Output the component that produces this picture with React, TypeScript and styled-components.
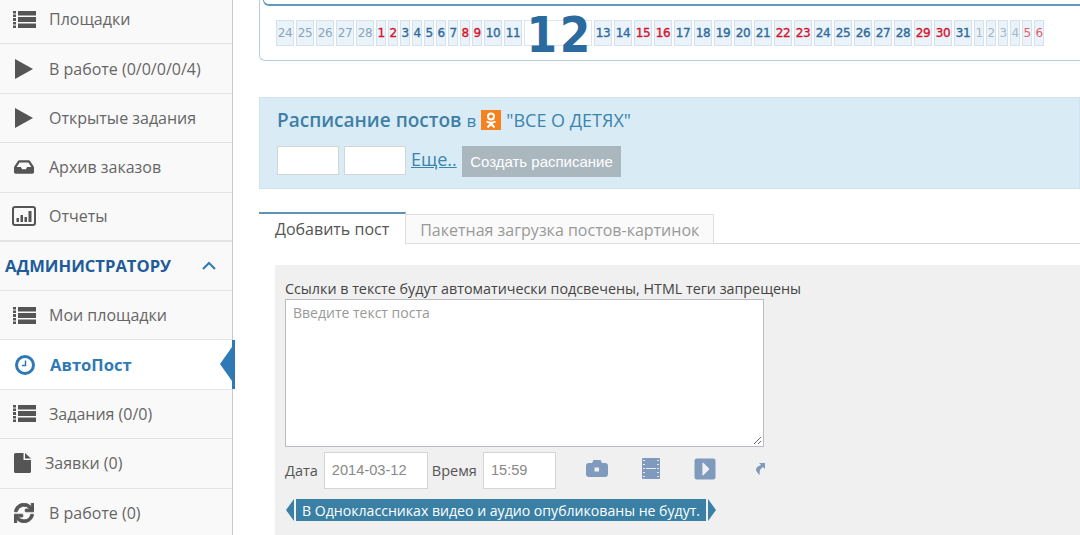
import React from 'react'
import styled, { createGlobalStyle } from 'styled-components'
import { FaInbox, FaSync, FaCaretSquareRight } from 'react-icons/fa'

const Global = createGlobalStyle`
  html, body { margin: 0; padding: 0; height: 535px; overflow: hidden; background: #fff; }
  body { font-family: "Open Sans", "Noto Sans", sans-serif; color: #555; }
  * { box-sizing: border-box; }
`
const Page = styled.div`
  display: flex;
  width: 1080px;
  height: 535px;
  overflow: hidden;
`
const Sidebar = styled.nav`
  flex: 0 0 233px;
  background: #f9f9f9;
  border-right: 1px solid #c8c8c8;
  height: 535px;
`
const MenuList = styled.ul<{ $pull?: number }>`
  list-style: none;
  margin: ${p => -(p.$pull ?? 0)}px 0 0;
  padding: 0;
`
const MenuItem = styled.li<{ $active?: boolean; $heavy?: boolean }>`
  position: relative;
  display: flex;
  align-items: center;
  height: 49.4px;
  padding-left: 12px;
  font-size: ${p => (p.$active ? 16.6 : 16)}px;
  color: ${p => (p.$active ? '#2f7ab5' : '#666')};
  font-weight: ${p => (p.$active ? 700 : 400)};
  background: ${p => (p.$active ? '#fff' : 'transparent')};
  border-bottom: ${p => (p.$heavy ? '2px solid #e4e4e4' : '1px solid #e4e4e4')};
`
const IconSlot = styled.span<{ $color?: string; $width?: number }>`
  display: flex;
  align-items: center;
  justify-content: center;
  width: ${p => p.$width ?? 37}px;
  flex: none;
  padding-right: ${p => ((p.$width ?? 37) > 30 ? 13 : 0)}px;
  color: ${p => p.$color ?? '#555'};
`
const ActiveMark = styled.span`
  position: absolute;
  right: -3px;
  top: 0;
  height: 49px;
  width: 15px;
  border-right: 3px solid #2f7ab5;
  &::before {
    content: '';
    position: absolute;
    right: 0;
    top: 7px;
    border-style: solid;
    border-width: 17px 12px 17px 0;
    border-color: transparent #2f7ab5 transparent transparent;
  }
`
const SectionHead = styled.div`
  display: flex;
  align-items: center;
  justify-content: space-between;
  height: 49px;
  padding: 0 16px 0 5px;
  font-size: 16.6px;
  font-weight: 700;
  color: #1f5c99;
  border-bottom: 1px solid #e4e4e4;
`
const Main = styled.main`
  flex: 1;
  min-width: 0;
  padding-left: 26px;
`
const CalendarCard = styled.section`
  height: 61px;
  border: 1px solid #b5cfdf;
  border-top: none;
  border-right: none;
  border-bottom-left-radius: 6px;
  padding-left: 3px;
`
const CalendarTop = styled.div`
  height: 6px;
  border: 1px solid #5f9bbd;
  border-width: 0 0 2px 1px;
  border-bottom-left-radius: 6px;
`
const DayStrip = styled.div`
  display: flex;
  align-items: center;
  gap: 2px;
  height: 26px;
  margin: 14px 0 0 13px;
`
const Day = styled.span<{ $tone: string; $wide: boolean; $dim?: boolean }>`
  display: flex;
  align-items: center;
  justify-content: center;
  width: ${p => (p.$wide ? 18 : 10)}px;
  height: 26px;
  font: 400 12px "DejaVu Sans", sans-serif;
  letter-spacing: -0.4px;
  -webkit-text-stroke: ${p => (p.$dim ? 0 : 0.35)}px ${p => p.$tone};
  color: ${p => p.$tone};
  background: #eaf3fa;
  border: 1px solid #d3e2ee;
`
const BigDay = styled.span`
  width: 68px;
  height: 26px;
  border: 1px solid #dde6ee;
  display: flex;
  justify-content: center;
  align-items: center;
`
const BigDigits = styled.span`
  font: 700 50px/26px "DejaVu Sans", sans-serif;
  color: #2a6a9e;
  letter-spacing: 3px;
  transform: translate(2px, 1.5px) scaleX(0.88);
`
const SchedulePanel = styled.section`
  margin-top: 36px;
  height: 92px;
  background: #d9ecf6;
  border: 1px solid #cfe4ef;
  padding: 9px 17px;
`
const PanelTitle = styled.div`
  display: flex;
  align-items: center;
  height: 26px;
  font-size: 18px;
  color: #3a84ad;
`
const TitleStrong = styled.strong`
  font-size: 19px;
  font-weight: 600;
  color: #3f7fa6;
`
const Preposition = styled.span`
  margin: 0 5px;
  font-size: 17px;
`
const OkBadge = styled.span`
  display: flex;
  width: 20px;
  height: 20px;
  background: #f5821f;
  margin-right: 5px;
`
const PanelControls = styled.div`
  display: flex;
  align-items: flex-start;
  margin-top: 13px;
`
const BlankInput = styled.div`
  width: 62px;
  height: 29px;
  background: #fff;
  border: 1px solid #d5d5d5;
  margin-right: 5px;
`
const MoreLink = styled.a`
  width: 51px;
  font-size: 18px;
  line-height: 26px;
  color: #3a84ad;
  text-decoration: underline;
`
const CreateButton = styled.div`
  width: 159px;
  height: 31px;
  background: #aab7bf;
  color: #fff;
  font: 15px/31px "Liberation Sans", sans-serif;
  text-align: center;
`
const Tabs = styled.div`
  display: flex;
  margin-top: 23px;
  height: 32px;
  border-bottom: 1px solid #d8d8d8;
`
const Tab = styled.div<{ $active?: boolean }>`
  height: ${p => (p.$active ? 32 : 30)}px;
  margin-top: ${p => (p.$active ? 0 : 2)}px;
  padding: 0 ${p => (p.$active ? 16 : 14)}px;
  font-size: 16px;
  line-height: 31px;
  color: ${p => (p.$active ? '#555' : '#999')};
  background: ${p => (p.$active ? '#fff' : '#fafafa')};
  border: 1px solid #ddd;
  border-top: ${p => (p.$active ? '2px solid #5f93b5' : '1px solid #ddd')};
  border-bottom: ${p => (p.$active ? 'none' : '1px solid #ddd')};
  border-left: ${p => (p.$active ? 'none' : '0')};
`
const FormBox = styled.section`
  margin: 21px 0 0 16px;
  height: 280px;
  background: #f0f0f0;
  padding: 13px 10px;
`
const Hint = styled.div`
  font-size: 14.3px;
  line-height: 21px;
  color: #444;
`
const PostText = styled.div`
  position: relative;
  width: 479px;
  height: 148px;
  background: #fff;
  border: 1px solid #b9bcc2;
  padding: 3px 7px;
  font-size: 14px;
  color: #999;
`
const Grip = styled.svg`
  position: absolute;
  right: 1px;
  bottom: 1px;
`
const DateRow = styled.div`
  display: flex;
  align-items: center;
  margin-top: 5px;
  height: 37px;
  font-size: 14.5px;
  color: #555;
`
const RowLabel = styled.span`
  margin-right: 6px;
`
const ValueField = styled.div<{ $w: number }>`
  width: ${p => p.$w}px;
  height: 37px;
  padding: 0 7px;
  background: #fff;
  border: 1px solid #d5d5d5;
  font: 14.6px/34px "Liberation Sans", sans-serif;
  color: #888;
  margin-right: 4px;
`
const MediaIcons = styled.div`
  display: flex;
  align-items: center;
  margin: 0 0 4px 26px;
  color: #7f9abd;
`
const MediaSlot = styled.span`
  display: flex;
  justify-content: center;
  width: 22px;
  margin-right: 32px;
`
const Notice = styled.div`
  display: inline-flex;
  align-items: center;
  height: 22px;
  margin: 10px 0 0 11px;
  padding: 0 6px;
  background: #3a80a5;
  color: #fff;
  font-size: 14.1px;
  white-space: nowrap;
  position: relative;
  &::before, &::after {
    content: '';
    position: absolute;
    top: 0;
    border-style: solid;
    border-color: transparent;
    border-width: 11px 0;
  }
  &::before { left: -10px; border-right: 8px solid #3a80a5; }
  &::after { right: -10px; border-left: 8px solid #3a80a5; }
`

const ListIcon = () => (
  <svg width="23" height="17" viewBox="0 0 23 17" fill="currentColor">
    <path d="M0 0h3v2.5H0zM5 0h18v4.5H5zM0 3.5h3v2.5H0zM0 7h3v3H0zM5 6h18v5H5zM0 11h3v2.5H0zM0 14.5h3V17H0zM5 12.5h18V17H5z" />
  </svg>
)
const PlayIcon = () => (
  <svg width="18" height="20" viewBox="0 0 18 20" fill="currentColor">
    <path d="M0 0L18 10L0 20z" />
  </svg>
)
const ReportIcon = () => (
  <svg width="24" height="20" viewBox="0 0 24 20">
    <rect x="1" y="1" width="22" height="18" rx="2" fill="none" stroke="currentColor" strokeWidth="2" />
    <path d="M4.5 12h2.5v4H4.5zM8.5 9h2.5v7H8.5zM12.5 11h2.5v5h-2.5zM16.5 5h3v11h-3z" fill="currentColor" />
  </svg>
)
const ClockIcon = () => (
  <svg width="20" height="20" viewBox="0 0 20 20" fill="none" stroke="currentColor">
    <circle cx="10" cy="10" r="8.5" strokeWidth="3" />
    <path d="M10.5 5.5V10.5H7" strokeWidth="1.5" />
  </svg>
)
const FileIcon = () => (
  <svg width="17" height="20" viewBox="0 0 17 20" fill="currentColor">
    <path d="M1.5 0H9.5V7H17V18.5Q17 20 15.5 20H1.5Q0 20 0 18.5V1.5Q0 0 1.5 0zM11 0L17 5.5H11z" />
  </svg>
)
const CameraIcon = () => (
  <svg width="22" height="17" viewBox="0 0 22 17" fill="currentColor">
    <path fillRule="evenodd" d="M6 3L7.5 0H14.5L16 3H19Q22 3 22 6V14Q22 17 19 17H3Q0 17 0 14V6Q0 3 3 3zM8.5 7.5V11.5H13V7.5z" />
  </svg>
)
const FilmIcon = () => (
  <svg width="18" height="21" viewBox="0 0 18 21">
    <rect width="18" height="21" rx="1" fill="currentColor" />
    <path d="M1 2.5h2M1 6.5h2M1 10.5h2M1 14.5h2M1 18.5h2M15 2.5h2M15 6.5h2M15 10.5h2M15 14.5h2M15 18.5h2M4 10.5h10" stroke="#e6ebf2" strokeWidth="1.2" />
  </svg>
)
const ShareIcon = () => (
  <svg width="12" height="14" viewBox="0 0 12 14" fill="currentColor">
    <path d="M6 1h6v6l-2-2C7 7 6 9 7 13 4 11 2 8 3.5 6 5 4 6.5 3.5 8 3z" />
  </svg>
)
const CollapseIcon = () => (
  <svg width="14" height="9" viewBox="0 0 14 9" fill="none" stroke="#2f7ab5" strokeWidth="2">
    <path d="M1 8L7 2L13 8" />
  </svg>
)

type DayT = { n: number; c: string; dim?: boolean }
const blue = '#2f6a99'
const red = '#d8122a'
const days: DayT[] = []
;[24, 25, 26, 27, 28].forEach(n => days.push({ n, c: '#8aa5bd', dim: true }))
for (let n = 1; n <= 11; n++) days.push({ n, c: n === 1 || n === 2 || n === 8 || n === 9 ? red : blue })
const after: DayT[] = []
for (let n = 13; n <= 31; n++) after.push({ n, c: [15, 16, 22, 23, 29, 30].includes(n) ? red : blue })
;[1, 2, 3, 4].forEach(n => after.push({ n, c: '#a5b8c8', dim: true }))
;[5, 6].forEach(n => after.push({ n, c: '#e2606e', dim: true }))

const renderDay = (d: DayT, i: number) => (
  <Day key={i} $tone={d.c} $wide={d.n > 9} $dim={d.dim}>{d.n}</Day>
)

function Item({ icon, label, active, heavy, iw }: { icon: React.ReactNode; label: string; active?: boolean; heavy?: boolean; iw?: number }) {
  return (
    <MenuItem $active={active} $heavy={heavy}>
      <IconSlot $color={active ? '#2f7ab5' : undefined} $width={iw}>{icon}</IconSlot>
      {label}
      {active && <ActiveMark />}
    </MenuItem>
  )
}

export default function App() {
  return (
    <Page>
      <Global />
      <Sidebar>
        <MenuList $pull={5}>
          <Item icon={<ListIcon />} label="Площадки" />
          <Item icon={<PlayIcon />} label="В работе (0/0/0/0/4)" />
          <Item icon={<PlayIcon />} label="Открытые задания" />
          <Item icon={<FaInbox size={20} />} label="Архив заказов" />
          <Item icon={<ReportIcon />} label="Отчеты" heavy />
        </MenuList>
        <SectionHead>АДМИНИСТРАТОРУ <CollapseIcon /></SectionHead>
        <MenuList>
          <Item icon={<ListIcon />} label="Мои площадки" />
          <Item icon={<ClockIcon />} label="АвтоПост" active iw={38} />
          <Item icon={<ListIcon />} label="Задания (0/0)" />
          <Item icon={<FileIcon />} label="Заявки (0)" iw={33} />
          <Item icon={<FaSync size={20} stroke="currentColor" strokeWidth={24} />} label="В работе (0)" />
        </MenuList>
      </Sidebar>
      <Main>
        <CalendarCard>
          <CalendarTop />
          <DayStrip>
            {days.map(renderDay)}
            <BigDay><BigDigits>12</BigDigits></BigDay>
            {after.map(renderDay)}
          </DayStrip>
        </CalendarCard>
        <SchedulePanel>
          <PanelTitle>
            <TitleStrong>Расписание постов</TitleStrong>
            <Preposition>в</Preposition>
            <OkBadge>
              <svg width="20" height="20" viewBox="0 0 20 20">
                <circle cx="10" cy="6.5" r="3" fill="none" stroke="#fff" strokeWidth="2" />
                <path d="M5.5 11.5 Q10 14 14.5 11.5 M10 13 V14 M6.5 17.5 L10 13.5 L13.5 17.5" fill="none" stroke="#fff" strokeWidth="2" />
              </svg>
            </OkBadge>
            "ВСЕ О ДЕТЯХ"
          </PanelTitle>
          <PanelControls>
            <BlankInput />
            <BlankInput />
            <MoreLink>Еще..</MoreLink>
            <CreateButton>Создать расписание</CreateButton>
          </PanelControls>
        </SchedulePanel>
        <Tabs>
          <Tab $active>Добавить пост</Tab>
          <Tab>Пакетная загрузка постов-картинок</Tab>
        </Tabs>
        <FormBox>
          <Hint>Ссылки в тексте будут автоматически подсвечены, HTML теги запрещены</Hint>
          <PostText>
            Введите текст поста
            <Grip width="10" height="10" viewBox="0 0 10 10">
              <path d="M9 2 L2 9 M9 6 L6 9" stroke="#666" strokeWidth="1" />
            </Grip>
          </PostText>
          <DateRow>
            <RowLabel>Дата</RowLabel>
            <ValueField $w={104}>2014-03-12</ValueField>
            <RowLabel>Время</RowLabel>
            <ValueField $w={73}>15:59</ValueField>
            <MediaIcons>
              <MediaSlot><CameraIcon /></MediaSlot>
              <MediaSlot><FilmIcon /></MediaSlot>
              <MediaSlot><FaCaretSquareRight size={24} /></MediaSlot>
              <MediaSlot><ShareIcon /></MediaSlot>
            </MediaIcons>
          </DateRow>
          <Notice>В Одноклассниках видео и аудио опубликованы не будут.</Notice>
        </FormBox>
      </Main>
    </Page>
  )
}
